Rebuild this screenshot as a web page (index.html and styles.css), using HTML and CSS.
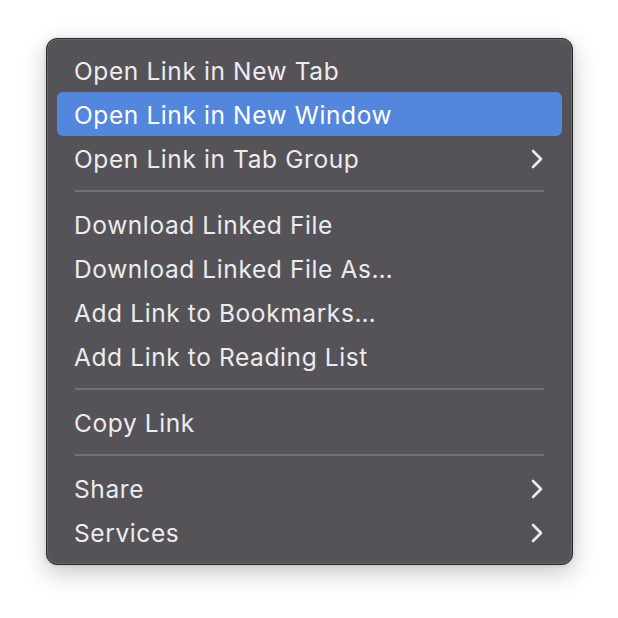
FILE: index.html
```html
<!DOCTYPE html>
<html>
<head>
<meta charset="utf-8">
<link rel="stylesheet" href="styles.css">
</head>
<body>
<div class="menu">
  <div class="item">Open Link in New Tab</div>
  <div class="item active">Open Link in New Window</div>
  <div class="item">Open Link in Tab Group<svg class="chev" viewBox="0 0 12 20"><path d="M2 2 L10 10 L2 18"/></svg></div>
  <div class="sep"></div>
  <div class="item">Download Linked File</div>
  <div class="item">Download Linked File As…</div>
  <div class="item">Add Link to Bookmarks…</div>
  <div class="item">Add Link to Reading List</div>
  <div class="sep"></div>
  <div class="item">Copy Link</div>
  <div class="sep"></div>
  <div class="item">Share<svg class="chev" viewBox="0 0 12 20"><path d="M2 2 L10 10 L2 18"/></svg></div>
  <div class="item">Services<svg class="chev" viewBox="0 0 12 20"><path d="M2 2 L10 10 L2 18"/></svg></div>
</div>
</body>
</html>
```
FILE: styles.css
```css
html, body {
  margin: 0;
  padding: 0;
  background: #ffffff;
}
body {
  width: 618px;
  height: 618px;
  padding-top: 38px;
  padding-left: 46px;
  box-sizing: border-box;
}
.menu {
  width: 527px;
  height: 527px;
  box-sizing: border-box;
  padding: 9px 10px;
  background: #555358;
  border: 1px solid #2a2a2c;
  border-radius: 11px;
  box-shadow: inset 0 0 0 1px #6a686c, 0 8px 24px rgba(0,0,0,0.22), 0 0 4px rgba(0,0,0,0.12);
  font-family: "Inter", "Liberation Sans", sans-serif;
  font-size: 24.5px;
  letter-spacing: 0.6px;
  color: #ecebee;
}
.item {
  height: 44px;
  display: flex;
  align-items: center;
  justify-content: space-between;
  padding: 1px 19px 0 17px;
  box-sizing: border-box;
  border-radius: 6px;
}
.item.active {
  background: #5287dd;
  color: #ffffff;
}
.sep {
  height: 2px;
  margin: 10px 18px;
  background: #747276;
}
.chev {
  width: 12px;
  height: 20px;
  fill: none;
  stroke: #ecebee;
  stroke-width: 2.6;
  stroke-linecap: round;
  stroke-linejoin: round;
}
```
